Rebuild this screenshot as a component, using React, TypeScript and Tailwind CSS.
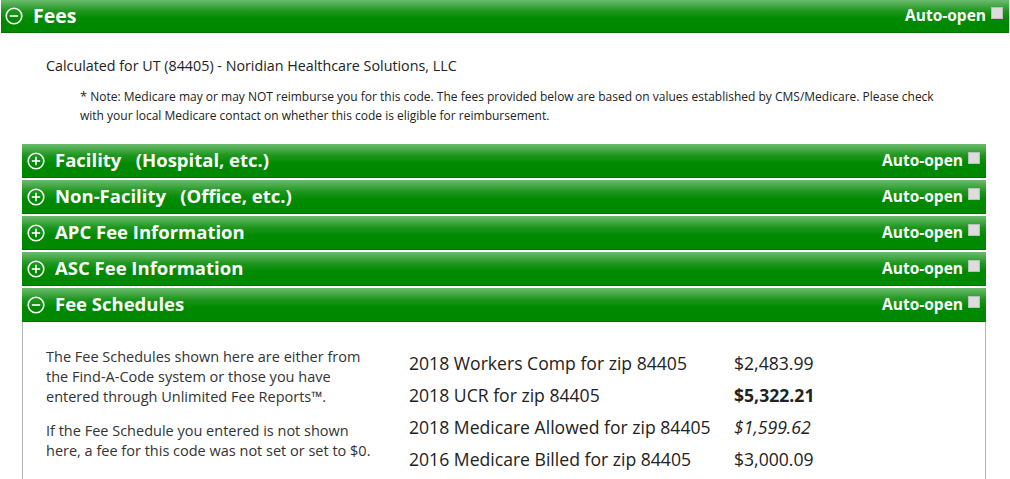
const font = { fontFamily: '"Open Sans", "Liberation Sans", sans-serif' };

const Circle = ({ open }: { open: boolean }) => (
  <svg width="18" height="18" viewBox="0 0 18 18" className="shrink-0">
    <circle cx="9" cy="9" r="7.8" fill="none" stroke="#ffffff" strokeWidth="1.6" />
    <line x1="4.8" y1="9" x2="13.2" y2="9" stroke="#ffffff" strokeWidth="1.6" />
    {!open && <line x1="9" y1="4.8" x2="9" y2="13.2" stroke="#ffffff" strokeWidth="1.6" />}
  </svg>
);

const Bar = ({ title, open, sub }: { title: React.ReactNode; open: boolean; sub?: boolean }) => (
  <div
    className={`flex items-center justify-between bg-[linear-gradient(to_bottom,#6cbb6c_0%,#1e961e_35%,#008a00_60%,#008800_100%)] border-b border-[#0a6e0a] text-white ${sub ? "h-[34px] pl-[5px] pr-[6px]" : "h-[33px] pl-[4px] pr-[6px]"}`}
  >
    <div className="flex items-center gap-[10px]">
      <Circle open={open} />
      <span className={`font-bold leading-none whitespace-pre ${sub ? "text-[18.5px]" : "text-[19.5px]"}`}>{title}</span>
    </div>
    <div className="flex items-center gap-[5px]">
      <span className="text-[15.5px] font-bold">Auto-open</span>
      <span className="w-[12px] h-[12px] bg-[#dcdcdc] border border-[#bdbdbd] mb-[6px]" />
    </div>
  </div>
);

const rows = [
  { label: "2018 Workers Comp for zip 84405", value: "$2,483.99", cls: "" },
  { label: "2018 UCR for zip 84405", value: "$5,322.21", cls: "font-bold" },
  { label: "2018 Medicare Allowed for zip 84405", value: "$1,599.62", cls: "italic" },
  { label: "2016 Medicare Billed for zip 84405", value: "$3,000.09", cls: "" },
];

export default function App() {
  return (
    <div className="w-[1010px] h-[479px] overflow-hidden bg-white text-[#222]" style={font}>
      <div className="px-[1px]">
        <Bar title="Fees" open />
      </div>
      <div className="pt-[23px] pl-[46px] text-[14.3px] leading-[20px]">
        Calculated for UT (84405) - Noridian Healthcare Solutions, LLC
      </div>
      <div className="pt-[11px] pl-[80px] pr-[70px] text-[12px] leading-[19px]">
        <span className="text-[13px]">*</span> Note: Medicare may or may NOT reimburse you for this code. The fees provided below are based on values established by CMS/Medicare. Please check with your local Medicare contact on whether this code is eligible for reimbursement.
      </div>
      <div className="mt-[19px] ml-[22px] w-[964px] flex flex-col gap-[2px]">
        <Bar sub title="Facility   (Hospital, etc.)" open={false} />
        <Bar sub title="Non-Facility   (Office, etc.)" open={false} />
        <Bar sub title="APC Fee Information" open={false} />
        <Bar sub title="ASC Fee Information" open={false} />
        <Bar sub title="Fee Schedules" open />
        <div className="-mt-[2px] border-l border-r border-[#b5b5b5] flex pt-[25px] h-[200px]">
          <div className="w-[386px] pl-[23px] pr-[28px] text-[14.5px] leading-[20px] text-[#333]">
            <p>The Fee Schedules shown here are either from the Find-A-Code system or those you have entered through Unlimited Fee Reports™.</p>
            <p className="mt-[14px]">If the Fee Schedule you entered is not shown here, a fee for this code was not set or set to $0.</p>
          </div>
          <div className="text-[17.6px] leading-[32px] text-[#222]">
            {rows.map((r) => (
              <div key={r.label} className="flex">
                <span className="w-[325px]">{r.label}</span>
                <span className={r.cls}>{r.value}</span>
              </div>
            ))}
          </div>
        </div>
      </div>
    </div>
  );
}
